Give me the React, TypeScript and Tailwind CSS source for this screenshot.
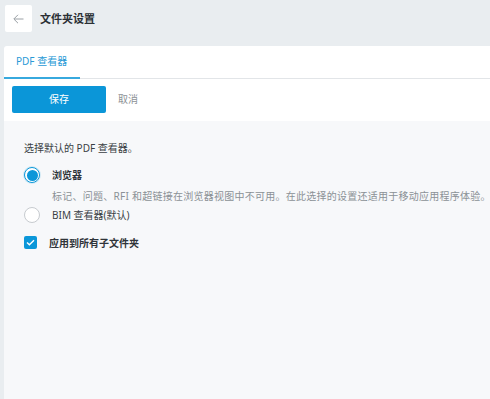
const font = { fontFamily: '"Noto Sans", "Noto Sans CJK SC", sans-serif' };

export default function App() {
  return (
    <div className="flex h-[399px] w-full flex-col overflow-hidden bg-[#e9edf0] text-[#33383d]" style={font}>
      {/* Header */}
      <div className="flex items-center px-[5px] pt-[5px] pb-[14px]">
        <button
          type="button"
          className="flex h-[27px] w-[27px] items-center justify-center rounded-[2px] bg-white text-[#9aa0a5]"
        >
          <svg width="11" height="10" viewBox="0 0 11 10" fill="none" stroke="currentColor" strokeWidth="1">
            <path d="M10.5 5H1M5 0.8L0.8 5L5 9.2" />
          </svg>
        </button>
        <h1 className="ml-[8px] text-[11px] font-bold leading-none text-[#2b3035]">文件夹设置</h1>
      </div>

      {/* Panel */}
      <div className="ml-[4px] flex flex-1 flex-col overflow-hidden rounded-tl-[3px] bg-white">
        {/* Tabs */}
        <div className="flex h-[33px] border-b border-[#e2e5e8]">
          <div className="-mb-px flex w-[76px] items-center border-b-2 border-[#37a9de] pl-[12px] text-[10px] text-[#2a9ad6]">
            PDF 查看器
          </div>
        </div>

        {/* Toolbar */}
        <div className="flex items-center pl-[8px] pt-[7px] pb-[8px]">
          <button
            type="button"
            className="h-[27px] w-[94px] rounded-[2px] bg-[#0b96d8] text-[10px] text-white"
          >
            保存
          </button>
          <button type="button" className="ml-[12px] text-[10px] text-[#8c9196]">
            取消
          </button>
        </div>

        {/* Content */}
        <div className="flex flex-1 flex-col bg-[#f7f8fa] pl-[20px] pt-[20px] text-[10px]">
          <p className="leading-[14px] text-[#3a3f44]">选择默认的 PDF 查看器。</p>

          <div className="mt-[12px] flex h-[16px] items-center">
            <span className="flex h-[16px] w-[16px] items-center justify-center rounded-full border-[1.5px] border-[#0b97d9] bg-white p-[1.5px] shadow-[0_0_0_1px_rgba(11,151,217,0.15)]">
              <span className="h-full w-full rounded-full bg-[#0b97d9]" />
            </span>
            <span className="ml-[12px] font-bold leading-[14px] text-[#2f3439]">浏览器</span>
          </div>
          <p className="mt-[6px] ml-[28px] whitespace-nowrap leading-[14px] tracking-[0.25px] text-[#8b9196]">
            标记、问题、RFI 和超链接在浏览器视图中不可用。在此选择的设置还适用于移动应用程序体验。
          </p>

          <div className="mt-[4px] flex h-[16px] items-center">
            <span className="h-[16px] w-[16px] rounded-full border border-[#c7cbcf] bg-white" />
            <span className="ml-[12px] leading-[14px] text-[#3a3f44]">BIM 查看器(默认)</span>
          </div>

          <div className="mt-[13px] flex h-[13px] items-center">
            <span className="flex h-[13px] w-[13px] items-center justify-center rounded-[2px] bg-[#0b97d9]">
              <svg width="9" height="7" viewBox="0 0 9 7" fill="none" stroke="white" strokeWidth="1.4">
                <path d="M1 3.5L3.4 5.8L8 1.2" />
              </svg>
            </span>
            <span className="ml-[12px] font-bold leading-[14px] text-[#2f3439]">应用到所有子文件夹</span>
          </div>
        </div>
      </div>
    </div>
  );
}
